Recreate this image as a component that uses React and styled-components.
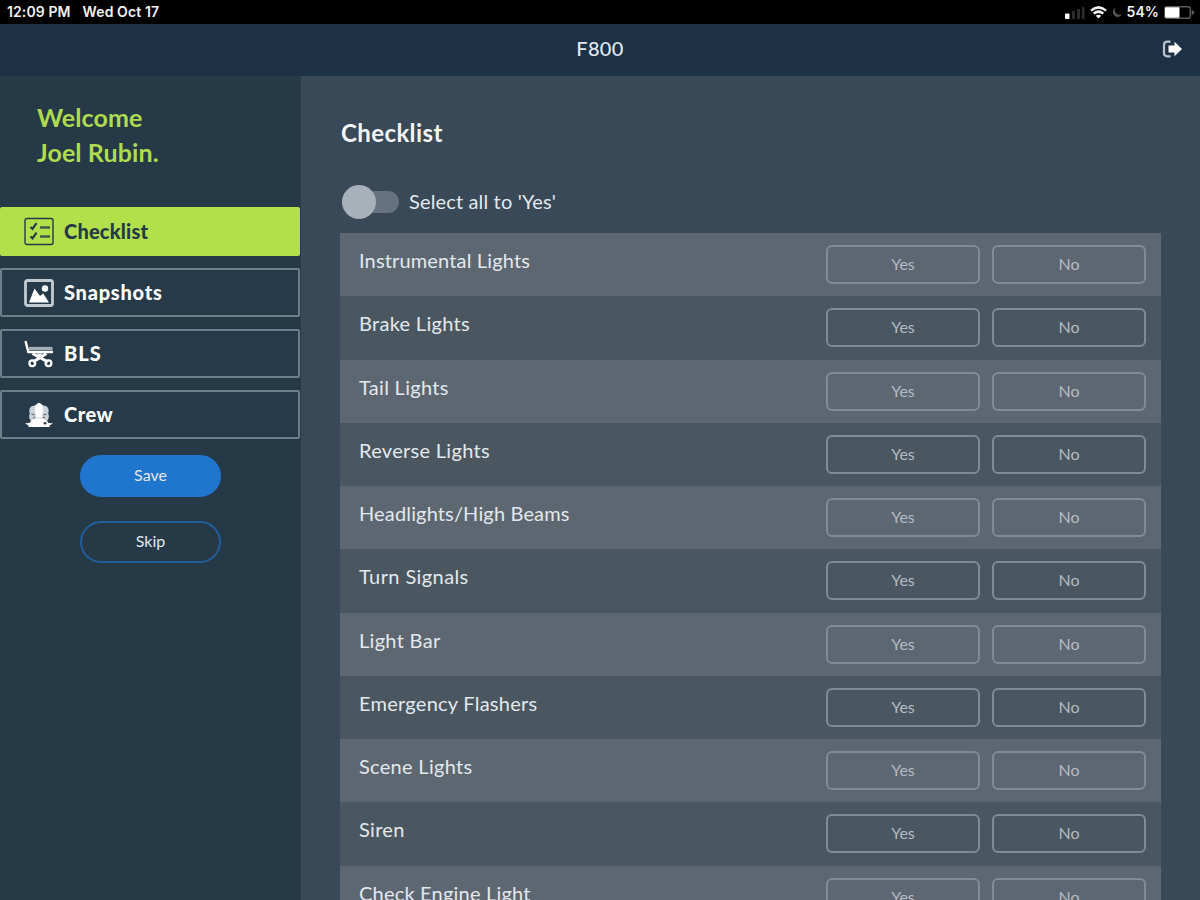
import React, { useState } from 'react';
import styled, { createGlobalStyle } from 'styled-components';

const CHECKLIST = [
    { label: 'Instrumental Lights', tracking: 0.15 },
    { label: 'Brake Lights', tracking: 0.3 },
    { label: 'Tail Lights', tracking: 0.3 },
    { label: 'Reverse Lights', tracking: 0.3 },
    { label: 'Headlights/High Beams', tracking: 0.15 },
    { label: 'Turn Signals', tracking: 0.4 },
    { label: 'Light Bar', tracking: 0.3 },
    { label: 'Emergency Flashers', tracking: 0.25 },
    { label: 'Scene Lights', tracking: 0.3 },
    { label: 'Siren', tracking: 0.3 },
    { label: 'Check Engine Light', tracking: 0.2 },
];

const ChecklistIcon = () => (
    <svg width="30" height="29" viewBox="0 0 30 29" fill="none" stroke="currentColor">
        <rect x="1" y="1.5" width="28" height="26" rx="2" strokeWidth="1.4" />
        <path d="M6.5 10l2 1.8 4-5.600M6.500 19.500l2 1.800 4-5.600" strokeWidth="2.200" />
        <path d="M16 10.500h10M16 19.500h10" strokeWidth="2.600" opacity=".8" />
    </svg>
);

const SnapshotIcon = () => (
    <svg width="30" height="28" viewBox="0 0 30 28">
        <rect x="1.5" y="1.5" width="27" height="25" rx="2" fill="none" stroke="#c3cbd1" strokeWidth="2.8" />
        <path d="M5 23.500L10.500 9.500l5.500 7.500 3.200-2.500 5.800 9z" fill="currentColor" />
        <circle cx="21" cy="9.500" r="3.200" fill="currentColor" />
    </svg>
);

const StretcherIcon = () => (
    <svg width="30" height="29" viewBox="0 0 30 29" fill="none" stroke="currentColor">
        <path d="M1.500 2l2.800 11H29" strokeWidth="2.400" />
        <path d="M5 9.500h23.500" stroke="#a3aeb6" strokeWidth="3.200" />
        <path d="M8.500 14.500l15.500 8.500M22.500 14.500L9 23" strokeWidth="3" />
        <path d="M12.500 14.500h6l-3 3.500z" fill="currentColor" stroke="none" />
        <circle cx="8.300" cy="24.300" r="2.900" strokeWidth="2.200" />
        <circle cx="24.500" cy="24.300" r="2.900" strokeWidth="2.200" />
    </svg>
);

const CrewIcon = () => (
    <svg width="30" height="26" viewBox="0 0 30 26">
        <path
            d="M6.500 18.500C5 16.500 4.800 13.500 5.800 11.500 4.300 7 6.500 3.500 11 3.500L15 .8l4 2.700c4.500 0 6.700 3.500 5.200 8 1 2 .8 5-.7 7z"
            fill="#ccd3d8"
        />
        <path d="M15 .8c2.600 1 4.200 3 4.200 6.200L18 15.500h-6L10.800 7c0-3.200 1.600-5.200 4.200-6.200z" fill="currentColor" />
        <path d="M7.500 12l3 1M22.500 12l-3 1M9 16l2-1M21 16l-2-1" stroke="#5f6f7a" strokeWidth="1.200" />
        <path d="M7 18.500l4.500-2h7l4.500 2 1 2.200 5 .8-3.500 2V25h-21v-1.500L1 21.500l5-.8z" fill="currentColor" />
        <path d="M19.500 20.300h3v1.500l-1.500 1-1.500-1z" fill="#263947" />
    </svg>
);

const LogoutIcon = () => (
    <svg width="21" height="18" viewBox="0 0 21 18">
        <path d="M8.500 1.700H5.500Q2 1.700 2 5v8q0 3.300 3.500 3.300h3" fill="none" stroke="#b9c4ce" strokeWidth="2.200" />
        <path d="M6.500 5.500h6V1.800L20 9l-7.500 7.200V12.500h-6z" fill="#fff" />
    </svg>
);

const SignalIcon = () => (
    <svg width="20" height="13" viewBox="0 0 20 13">
        <rect x="0" y="7.500" width="4.500" height="5.500" rx="1" fill="#fff" />
        <path d="M7 5h3v8H7zM12 3h3v10h-3zM17 1h2.500v12H17z" fill="#2c2c2c" />
    </svg>
);

const WifiIcon = () => (
    <svg width="17" height="13" viewBox="0 0 17 13" fill="none" stroke="#f2f2f2">
        <path d="M1 4.600Q8.500-1.800 16 4.600M3.700 7.600q4.800-4 9.600 0" strokeWidth="2.500" />
        <path d="M8.500 12.500L5.700 9.700q2.800-2 5.600 0z" fill="#f2f2f2" stroke="none" />
    </svg>
);

const MoonIcon = () => (
    <svg width="10" height="11" viewBox="0 0 10 11">
        <path d="M3 .8C-.5 3.500.5 9.800 5.500 10 7.500 10 9 9 9.600 7.600 5.500 8.500 2 5.500 3 .8z" fill="#555" />
    </svg>
);

const BatteryIcon = () => (
    <svg width="31" height="13" viewBox="0 0 31 13">
        <rect x=".8" y=".8" width="25.500" height="11.400" rx="2" fill="none" stroke="#5c5c5c" strokeWidth="1.400" />
        <rect x="1" y="1.200" width="14.500" height="10.600" rx="1" fill="#fff" />
        <path d="M27.700 3.500l3 3-3 3z" fill="#5c5c5c" />
    </svg>
);

const NAV = [
    { name: 'Checklist', icon: ChecklistIcon, tracking: 0.2 },
    { name: 'Snapshots', icon: SnapshotIcon, tracking: 0.75 },
    { name: 'BLS', icon: StretcherIcon, tracking: 1 },
    { name: 'Crew', icon: CrewIcon, tracking: 0.5 },
];

function App() {
    const [page, setPage] = useState('Checklist');
    const [allYes, setAllYes] = useState(false);
    const [answers, setAnswers] = useState({});

    const toggleAll = () => {
        const next = !allYes;
        setAllYes(next);
        setAnswers(next ? Object.fromEntries(CHECKLIST.map((item) => [item.label, 'Yes'])) : {});
    };

    return (
        <Screen>
            <GlobalStyle />
            <StatusBar>
                <StatusGroup $gap={12}>
                    <span>12:09 PM</span>
                    <span>Wed Oct 17</span>
                </StatusGroup>
                <StatusGroup $gap={5}>
                    <SignalIcon />
                    <WifiIcon />
                    <MoonIcon />
                    <span>54%</span>
                    <BatteryIcon />
                </StatusGroup>
            </StatusBar>
            <Header>
                <Unit>F800</Unit>
                <LogoutButton aria-label="Log out">
                    <LogoutIcon />
                </LogoutButton>
            </Header>
            <Body>
                <SideBar>
                    <Welcome>
                        <div>Welcome</div>
                        <div>Joel Rubin.</div>
                    </Welcome>
                    <Nav>
                        {NAV.map(({ name, icon: Icon, tracking }) => (
                            <NavItem key={name} $active={page === name} $tracking={tracking} onClick={() => setPage(name)}>
                                <Icon />
                                <span>{name}</span>
                            </NavItem>
                        ))}
                    </Nav>
                    <Actions>
                        <PillButton $primary>Save</PillButton>
                        <PillButton>Skip</PillButton>
                    </Actions>
                </SideBar>
                <Main>
                    <Title>Checklist</Title>
                    <SelectAll>
                        <Switch role="switch" aria-checked={allYes} onClick={toggleAll}>
                            <Knob $on={allYes} />
                        </Switch>
                        <SelectLabel>Select all to 'Yes'</SelectLabel>
                    </SelectAll>
                    <List>
                        {CHECKLIST.map(({ label, tracking }) => (
                            <Row key={label}>
                                <Label $tracking={tracking}>{label}</Label>
                                <Options>
                                    {['Yes', 'No'].map((option) => (
                                        <Option
                                            key={option}
                                            $selected={answers[label] === option}
                                            onClick={() => setAnswers({ ...answers, [label]: option })}
                                        >
                                            {option}
                                        </Option>
                                    ))}
                                </Options>
                            </Row>
                        ))}
                    </List>
                </Main>
            </Body>
        </Screen>
    );
}

const GlobalStyle = createGlobalStyle`
    * {
        box-sizing: border-box;
    }
    body {
        margin: 0;
        overflow: hidden;
        background: #3a4958;
    }
    button {
        font-family: inherit;
        cursor: pointer;
    }
    svg {
        display: block;
        flex-shrink: 0;
    }
`;

const Screen = styled.div`
    display: flex;
    flex-direction: column;
    width: 1200px;
    height: 900px;
    overflow: hidden;
    font-family: Lato, "Open Sans", sans-serif;
    color: #e3e8ec;
`;

const StatusBar = styled.div`
    display: flex;
    justify-content: space-between;
    flex: 0 0 24px;
    padding: 0 5px 0 7px;
    background: #000;
    color: #f2f2f2;
    font: 600 14px/24px Inter, sans-serif;
`;

const StatusGroup = styled.div`
    display: flex;
    align-items: center;
    gap: ${(p) => p.$gap}px;
    letter-spacing: 0.1px;
`;

const Header = styled.header`
    display: grid;
    grid-template-columns: 1fr auto 1fr;
    align-items: center;
    flex: 0 0 52px;
    padding: 0 17px 2px;
    background: #1c3046;
`;

const Unit = styled.div`
    grid-column: 2;
    padding-bottom: 2px;
    font-size: 20px;
    font-weight: 500;
    letter-spacing: 0.3px;
    line-height: 48px;
`;

const LogoutButton = styled.button`
    justify-self: end;
    padding: 0;
    border: 0;
    background: none;
`;

const Body = styled.div`
    display: flex;
    flex: 1;
    min-height: 0;
`;

const SideBar = styled.aside`
    flex: 0 0 301px;
    background: #263947;
`;

const Welcome = styled.div`
    height: 131px;
    padding: 24px 37px 0;
    color: #aedb4f;
    font-size: 25px;
    font-weight: 700;
    letter-spacing: 0.1px;
    line-height: 35px;
`;

const Nav = styled.nav`
    display: flex;
    flex-direction: column;
    gap: 12px;
    padding-right: 1px;
`;

const NavItem = styled.button`
    display: flex;
    align-items: center;
    gap: 10px;
    height: 49px;
    padding: 0 0 0 22px;
    border: 2px solid ${(p) => (p.$active ? '#b2e04b' : '#6d7f8b')};
    border-radius: 2px;
    background: ${(p) => (p.$active ? '#b2e04b' : '#263a49')};
    color: ${(p) => (p.$active ? '#263947' : '#fff')};
    font-size: 20px;
    font-weight: 900;
    letter-spacing: ${(p) => p.$tracking}px;

    span {
        padding-bottom: 2px;
    }
`;

const Actions = styled.div`
    display: flex;
    flex-direction: column;
    align-items: center;
    gap: 24px;
    padding-top: 16px;
`;

const PillButton = styled.button`
    width: 141px;
    height: 42px;
    padding: 0 0 3px;
    border: 2px solid ${(p) => (p.$primary ? '#2075cf' : '#205f9c')};
    border-radius: 21px;
    background: ${(p) => (p.$primary ? '#2075cf' : 'transparent')};
    color: #e3e8ec;
    font-size: 16px;
`;

const Main = styled.main`
    flex: 1;
    min-width: 0;
    padding: 40px 39px 0 39px;
    background: #3a4958;
`;

const Title = styled.h1`
    margin: 0;
    padding-left: 1px;
    color: #f4f6f8;
    font-size: 24px;
    font-weight: 700;
    letter-spacing: 0.4px;
    line-height: 34px;
`;

const SelectAll = styled.div`
    display: flex;
    align-items: center;
    gap: 10px;
    height: 36px;
    margin: 34px 0 13px;
    padding-left: 2px;
    font-size: 20px;
`;

const SelectLabel = styled.span`
    padding-bottom: 2px;
    letter-spacing: 0.15px;
`;

const Switch = styled.button`
    display: flex;
    align-items: center;
    width: 57px;
    height: 22px;
    padding: 0;
    border: 0;
    border-radius: 11px;
    background: #657381;
`;

const Knob = styled.span`
    width: 34px;
    height: 34px;
    flex-shrink: 0;
    border-radius: 50%;
    background: #a8b0b9;
    transform: translateX(${(p) => (p.$on ? 23 : 0)}px);
`;

const List = styled.div`
    display: flex;
    flex-direction: column;
`;

const Row = styled.div`
    display: flex;
    justify-content: space-between;
    height: 63.25px;
    padding: 12px 15px 0 19px;
    background: #4a5761;

    &:nth-child(odd) {
        background: #5d6772;
    }
`;

const Label = styled.div`
    font-size: 20px;
    line-height: 30px;
    letter-spacing: ${(p) => p.$tracking}px;
`;

const Options = styled.div`
    display: flex;
    gap: 12px;
`;

const Option = styled.button`
    width: 154px;
    height: 39px;
    padding: 0 0 2px;
    border: 2px solid #7f8b95;
    border-radius: 6px;
    background: ${(p) => (p.$selected ? '#2075cf' : 'transparent')};
    color: #b3bbc2;
    font-size: 16px;
`;

export default App;
